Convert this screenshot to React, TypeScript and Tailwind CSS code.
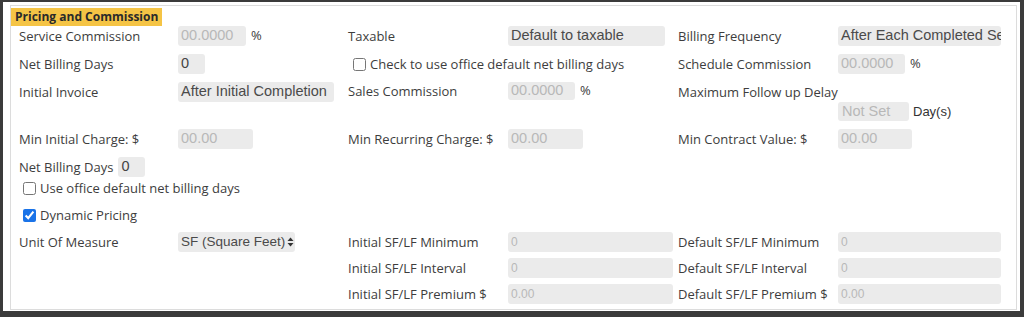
import React from "react";

const LBL = "text-[13px] text-[#3d3d3d] leading-none whitespace-nowrap";
const lblFont = { fontFamily: '"Open Sans", "Noto Sans", sans-serif' };
const inFont = { fontFamily: '"Liberation Sans", Arial, sans-serif' };

function Box({ w, value, dark, small }: { w: string; value: string; dark?: boolean; small?: boolean }) {
  return (
    <div
      className={`${w} h-[20px] bg-[#ebebeb] rounded-[3px] flex items-center pl-[3px] overflow-hidden whitespace-nowrap ${dark ? "text-[#444]" : "text-[#b8b8b8]"} ${small ? "text-[12px]" : "text-[14.5px]"}`}
      style={inFont}
    >
      {value}
    </div>
  );
}

function Sel({ w, value, arrows, size }: { w: string; value: string; arrows?: boolean; size?: string }) {
  return (
    <div
      className={`${w} h-[20px] bg-[#ebebeb] rounded-[3px] flex items-center pl-[3px] overflow-hidden whitespace-nowrap ${size ?? "text-[14.5px]"} text-[#4a4a4a]`}
      style={inFont}
    >
      {value}
      {arrows && (
        <svg width="7" height="10" viewBox="0 0 7 10" className="ml-[2px] shrink-0">
          <path d="M3.5 0.5 L6.5 4 L0.5 4 Z" fill="#333" />
          <path d="M3.5 9.5 L6.5 6 L0.5 6 Z" fill="#333" />
        </svg>
      )}
    </div>
  );
}

function Label({ w, children }: { w: string; children: React.ReactNode }) {
  return (
    <div className={`${w} ${LBL} shrink-0`} style={lblFont}>
      {children}
    </div>
  );
}

function Pct() {
  return (
    <span className="ml-[5px] text-[13px] text-[#3d3d3d]" style={lblFont}>
      %
    </span>
  );
}

function Check({ checked, label }: { checked?: boolean; label: string }) {
  return (
    <label className="flex items-center gap-[4px]">
      <input type="checkbox" defaultChecked={checked} className="w-[13px] h-[13px] m-0 accent-[#1a73e8]" />
      <span className={LBL} style={lblFont}>
        {label}
      </span>
    </label>
  );
}

export default function App() {
  return (
    <div className="w-[1024px] h-[317px] bg-[#3b3b3b] pt-[2px] pl-[3px] pr-[4px] pb-[6px]">
      <div className="h-full bg-white pt-[3px] pl-[7px] pr-[3px] pb-[1px]">
        <div className="h-full border border-[#dcdcdc] flex flex-col">
          <div className="mt-[2px] self-start bg-[#f5c445] px-[4px] h-[18px] flex items-center text-[12px] font-bold text-[#2a2a2a] leading-none" style={lblFont}>
            Pricing and Commission
          </div>
          <div className="pl-[8px] flex flex-col">
            {/* Row 1 */}
            <div className="grid grid-cols-[329px_330px_1fr] h-[20px] items-center">
              <div className="flex items-center">
                <Label w="w-[159px]">Service Commission</Label>
                <Box w="w-[68px]" value="00.0000" />
                <Pct />
              </div>
              <div className="flex items-center">
                <Label w="w-[160px]">Taxable</Label>
                <Sel w="w-[157px]" value="Default to taxable" />
              </div>
              <div className="flex items-center">
                <Label w="w-[160px]">Billing Frequency</Label>
                <Sel w="w-[163px]" value="After Each Completed Service" />
              </div>
            </div>
            {/* Row 2 */}
            <div className="grid grid-cols-[329px_330px_1fr] h-[20px] items-center mt-[8px]">
              <div className="flex items-center">
                <Label w="w-[159px]">Net Billing Days</Label>
                <Box w="w-[27px]" value="0" dark />
              </div>
              <div className="flex items-center pl-[5px]">
                <Check label="Check to use office default net billing days" />
              </div>
              <div className="flex items-center">
                <Label w="w-[160px]">Schedule Commission</Label>
                <Box w="w-[67px]" value="00.0000" />
                <Pct />
              </div>
            </div>
            {/* Row 3 */}
            <div className="grid grid-cols-[329px_330px_1fr] h-[20px] items-center mt-[8px]">
              <div className="flex items-center">
                <Label w="w-[159px]">Initial Invoice</Label>
                <Sel w="w-[156px]" value="After Initial Completion" />
              </div>
              <div className="flex items-center self-start h-[18px]">
                <Label w="w-[160px]">Sales Commission</Label>
                <div className="w-[67px] h-[18px] bg-[#ebebeb] rounded-[3px] flex items-center pl-[3px] text-[14.5px] text-[#b8b8b8]" style={inFont}>
                  00.0000
                </div>
                <Pct />
              </div>
              <div className="flex items-center">
                <Label w="w-[160px]">Maximum Follow up Delay</Label>
              </div>
            </div>
            {/* Row 3b */}
            <div className="grid grid-cols-[329px_330px_1fr] h-[19px] items-center">
              <div />
              <div />
              <div className="flex items-center pl-[160px]">
                <div className="w-[71px] h-[19px] bg-[#ebebeb] rounded-[3px] flex items-center pl-[4px] text-[14.5px] text-[#b8b8b8]" style={inFont}>
                  Not Set
                </div>
                <span className="ml-[4px] text-[13px] text-[#333]" style={inFont}>
                  Day(s)
                </span>
              </div>
            </div>
            {/* Row 4 */}
            <div className="grid grid-cols-[329px_330px_1fr] h-[20px] items-center mt-[8px]">
              <div className="flex items-center">
                <Label w="w-[159px]">Min Initial Charge: $</Label>
                <Box w="w-[75px]" value="00.00" />
              </div>
              <div className="flex items-center">
                <Label w="w-[160px]">Min Recurring Charge: $</Label>
                <Box w="w-[75px]" value="00.00" />
              </div>
              <div className="flex items-center">
                <Label w="w-[160px]">Min Contract Value: $</Label>
                <Box w="w-[74px]" value="00.00" />
              </div>
            </div>
            {/* Row 5 */}
            <div className="flex h-[20px] items-center mt-[8px]">
              <span className={LBL} style={lblFont}>
                Net Billing Days
              </span>
              <div className="ml-[5px]">
                <Box w="w-[27px]" value="0" dark />
              </div>
            </div>
            {/* Row F */}
            <div className="flex h-[20px] items-center mt-[1px] pl-[4px]">
              <Check label="Use office default net billing days" />
            </div>
            {/* Row G */}
            <div className="flex h-[20px] items-center mt-[7px] pl-[4px]">
              <Check checked label="Dynamic Pricing" />
            </div>
            {/* Row H */}
            <div className="grid grid-cols-[329px_330px_1fr] h-[20px] items-center mt-[7px]">
              <div className="flex items-center">
                <Label w="w-[159px]">Unit Of Measure</Label>
                <Sel w="w-[117px]" value="SF (Square Feet)" arrows size="text-[13.5px]" />
              </div>
              <div className="flex items-center">
                <Label w="w-[160px]">Initial SF/LF Minimum</Label>
                <Box w="w-[165px]" value="0" small />
              </div>
              <div className="flex items-center">
                <Label w="w-[160px]">Default SF/LF Minimum</Label>
                <Box w="w-[163px]" value="0" small />
              </div>
            </div>
            {/* Row I */}
            <div className="grid grid-cols-[329px_330px_1fr] h-[20px] items-center mt-[6px]">
              <div />
              <div className="flex items-center">
                <Label w="w-[160px]">Initial SF/LF Interval</Label>
                <Box w="w-[165px]" value="0" small />
              </div>
              <div className="flex items-center">
                <Label w="w-[160px]">Default SF/LF Interval</Label>
                <Box w="w-[163px]" value="0" small />
              </div>
            </div>
            {/* Row J */}
            <div className="grid grid-cols-[329px_330px_1fr] h-[20px] items-center mt-[6px]">
              <div />
              <div className="flex items-center">
                <Label w="w-[160px]">Initial SF/LF Premium $</Label>
                <Box w="w-[165px]" value="0.00" small />
              </div>
              <div className="flex items-center">
                <Label w="w-[160px]">Default SF/LF Premium $</Label>
                <Box w="w-[163px]" value="0.00" small />
              </div>
            </div>
          </div>
        </div>
      </div>
    </div>
  );
}
